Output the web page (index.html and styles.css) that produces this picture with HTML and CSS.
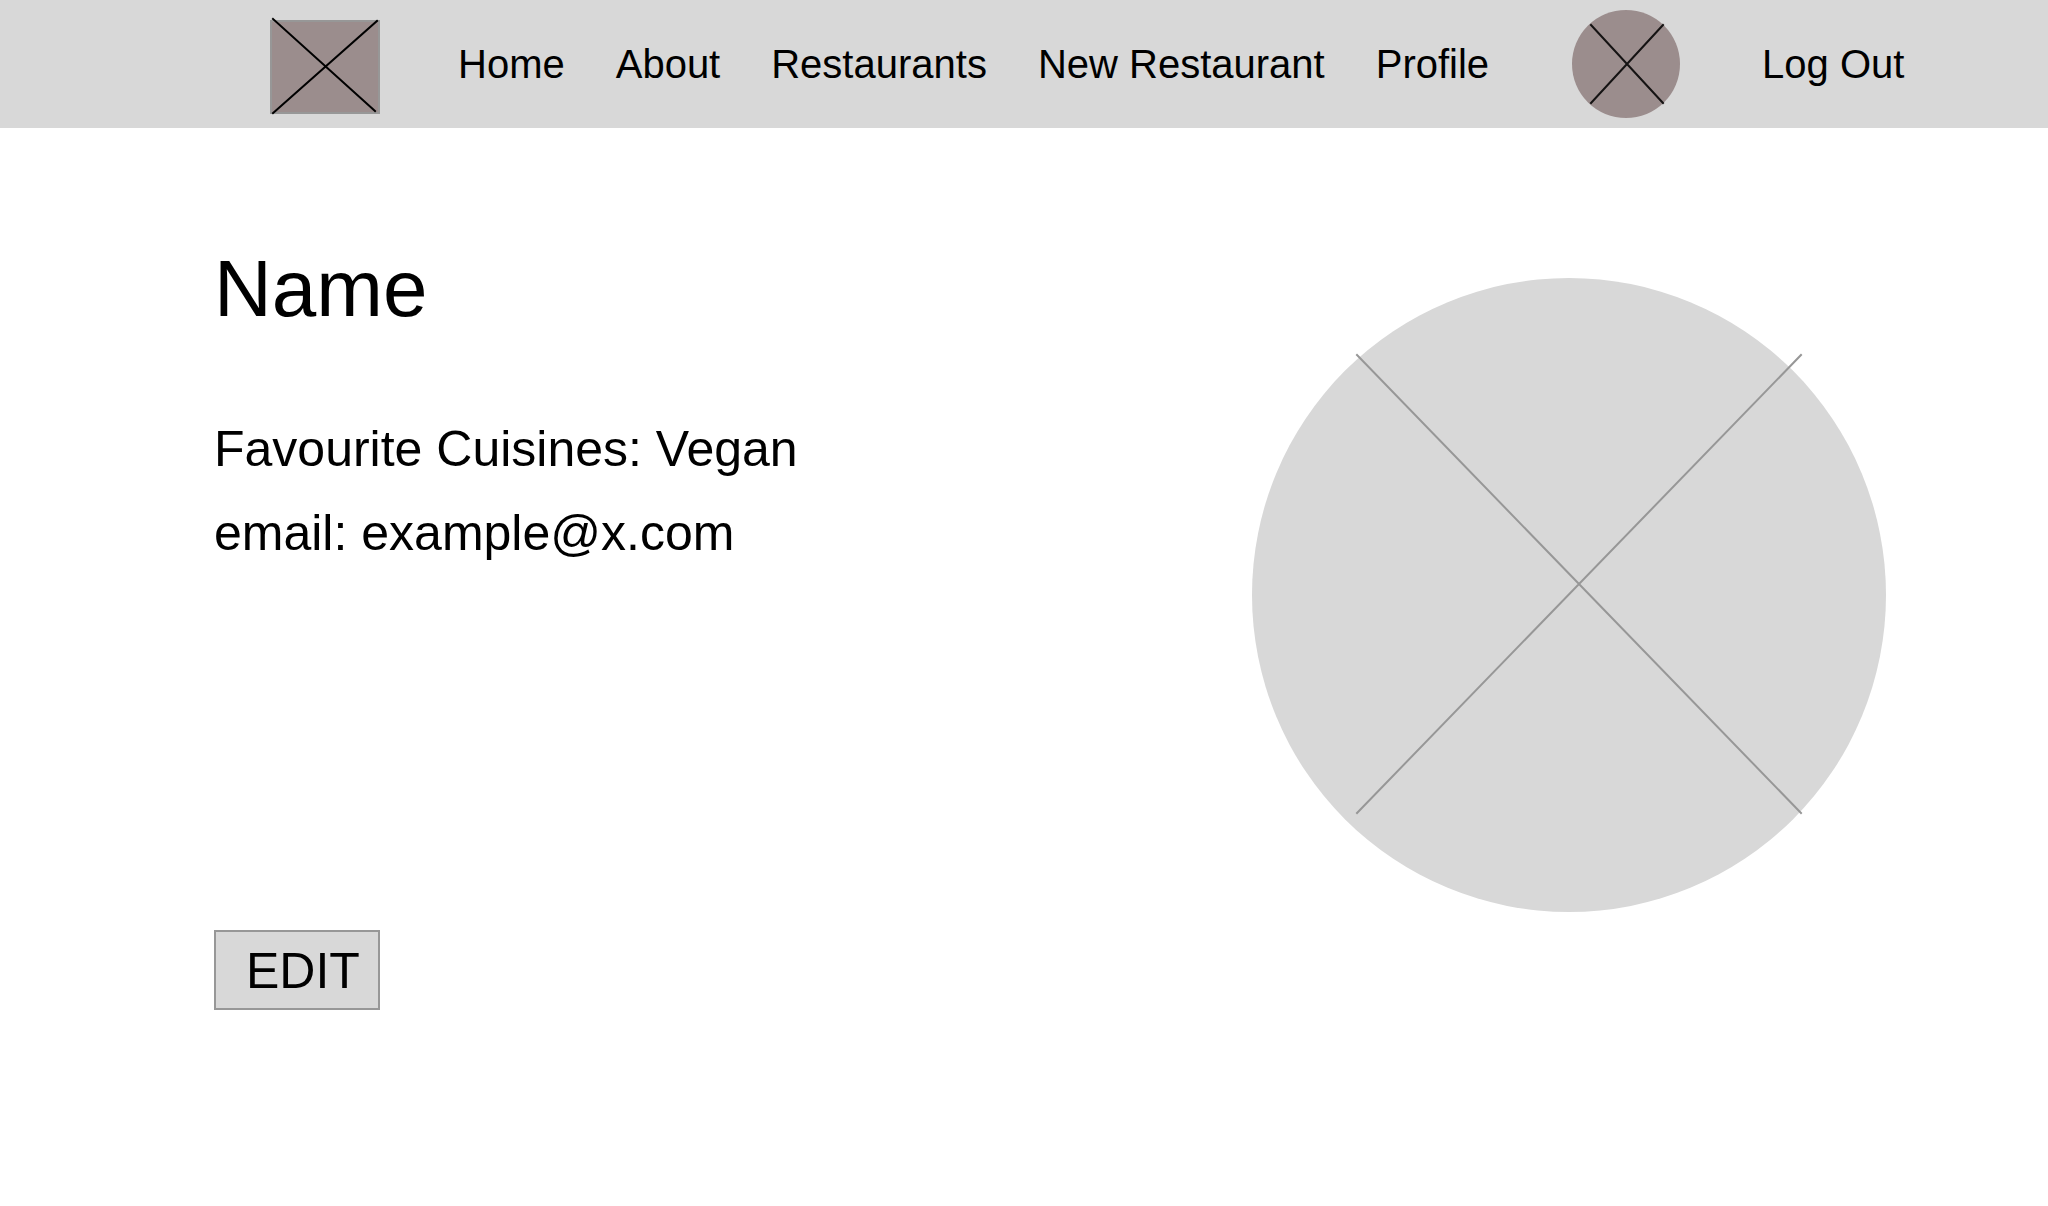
FILE: index.html
```html
<!DOCTYPE html>
<html lang="en">
<head>
  <meta charset="utf-8">
  <meta name="viewport" content="width=device-width, initial-scale=1">
  <title>Profile</title>
  <link rel="stylesheet" href="styles.css">
</head>
<body>
  <header class="site-header">
    <a class="logo" href="#" aria-label="Logo">
      <svg class="logo-image" viewBox="0 0 110 94" aria-hidden="true">
        <rect x="1" y="1" width="108" height="92" fill="#9b8d8d" stroke="#979797" stroke-width="2"/>
        <path d="M3 -1L105 91M107 1L3 93" stroke="#000" stroke-width="2" stroke-linecap="square"/>
      </svg>
    </a>
    <nav class="site-nav">
      <a href="#">Home</a>
      <a href="#">About</a>
      <a href="#">Restaurants</a>
      <a href="#">New Restaurant</a>
      <a href="#">Profile</a>
    </nav>
    <div class="account">
      <svg class="avatar" viewBox="0 0 108 108" role="img" aria-label="Avatar">
        <circle cx="54" cy="54" r="54" fill="#9b8d8d"/>
        <path d="M19 15L91 93M91 15L19 93" stroke="#151313" stroke-width="2" stroke-linecap="square"/>
      </svg>
      <a href="#">Log Out</a>
    </div>
  </header>
  <main class="profile">
    <section class="details">
      <h1 class="name">Name</h1>
      <p class="detail">Favourite Cuisines: Vegan</p>
      <p class="detail">email: example@x.com</p>
      <button class="edit" type="button">EDIT</button>
    </section>
    <svg class="photo" viewBox="0 0 634 634" role="img" aria-label="Profile photo">
      <circle cx="317" cy="317" r="317" fill="#d8d8d8"/>
      <path d="M105 77L549 535M549 77L105 535" stroke="#979797" stroke-width="2" stroke-linecap="square"/>
    </svg>
  </main>
</body>
</html>
```

FILE: styles.css
```css
* {
  box-sizing: border-box;
}

body {
  margin: 0;
  background: #fff;
  color: #000;
  font-family: "Liberation Sans", Arial, Helvetica, sans-serif;
}

a {
  color: inherit;
  text-decoration: none;
}

.site-header {
  display: flex;
  flex-wrap: wrap;
  align-items: center;
  min-height: 128px;
  padding: 0 20px 0 270px;
  background: #d8d8d8;
  font-size: 40px;
}

.logo {
  display: flex;
  padding-top: 6px;
}

.logo-image {
  width: 110px;
  height: 94px;
  overflow: visible;
}

.site-nav {
  display: flex;
  flex-wrap: wrap;
  gap: 0 51px;
  margin: 0 83px 0 78px;
}

.account {
  display: flex;
  align-items: center;
  gap: 82px;
}

.avatar {
  width: 108px;
  height: 108px;
}

.profile {
  display: flex;
  flex-wrap: wrap;
  justify-content: space-between;
  align-items: flex-start;
  padding: 115px 162px 115px 214px;
}

.name {
  margin: 0 0 72px;
  font-size: 80px;
  font-weight: 400;
  line-height: 92px;
}

.detail {
  margin: 0;
  font-size: 50px;
  line-height: 84px;
}

.edit {
  display: block;
  margin: 355px 0 0;
  padding: 10px 18px 8px 30px;
  border: 2px solid #979797;
  border-radius: 0;
  background: #d8d8d8;
  color: inherit;
  font: inherit;
  font-size: 50px;
  line-height: 58px;
}

.photo {
  width: 634px;
  max-width: 100%;
  margin-top: 35px;
  overflow: visible;
}
```
